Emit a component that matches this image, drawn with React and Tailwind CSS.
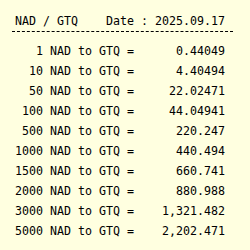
import React from "react";

const rows = [
  ["1", "0.44049"],
  ["10", "4.40494"],
  ["50", "22.02471"],
  ["100", "44.04941"],
  ["500", "220.247"],
  ["1000", "440.494"],
  ["1500", "660.741"],
  ["2000", "880.988"],
  ["3000", "1,321.482"],
  ["5000", "2,202.471"],
];

export default function App() {
  return (
    <div
      className="w-[250px] h-[250px] bg-[#ffffe0] text-black text-[11.63px] leading-[20px] overflow-hidden"
      style={{ fontFamily: '"DejaVu Sans Mono", monospace' }}
    >
      <div className="pt-[11px] pl-[15px] pr-[25px] flex justify-between whitespace-pre">
        <span>NAD / GTQ</span>
        <span>Date : 2025.09.17</span>
      </div>
      <div className="ml-[12px] w-[221px] border-b border-dashed border-black" />
      <div className="pt-[9px] pl-[15px] pr-[25px]">
        {rows.map(([a, v]) => (
          <div key={a} className="flex whitespace-pre">
            <span className="w-[119px] text-right">{a} NAD to GTQ =</span>
            <span className="flex-1 text-right">{v}</span>
          </div>
        ))}
      </div>
    </div>
  );
}
